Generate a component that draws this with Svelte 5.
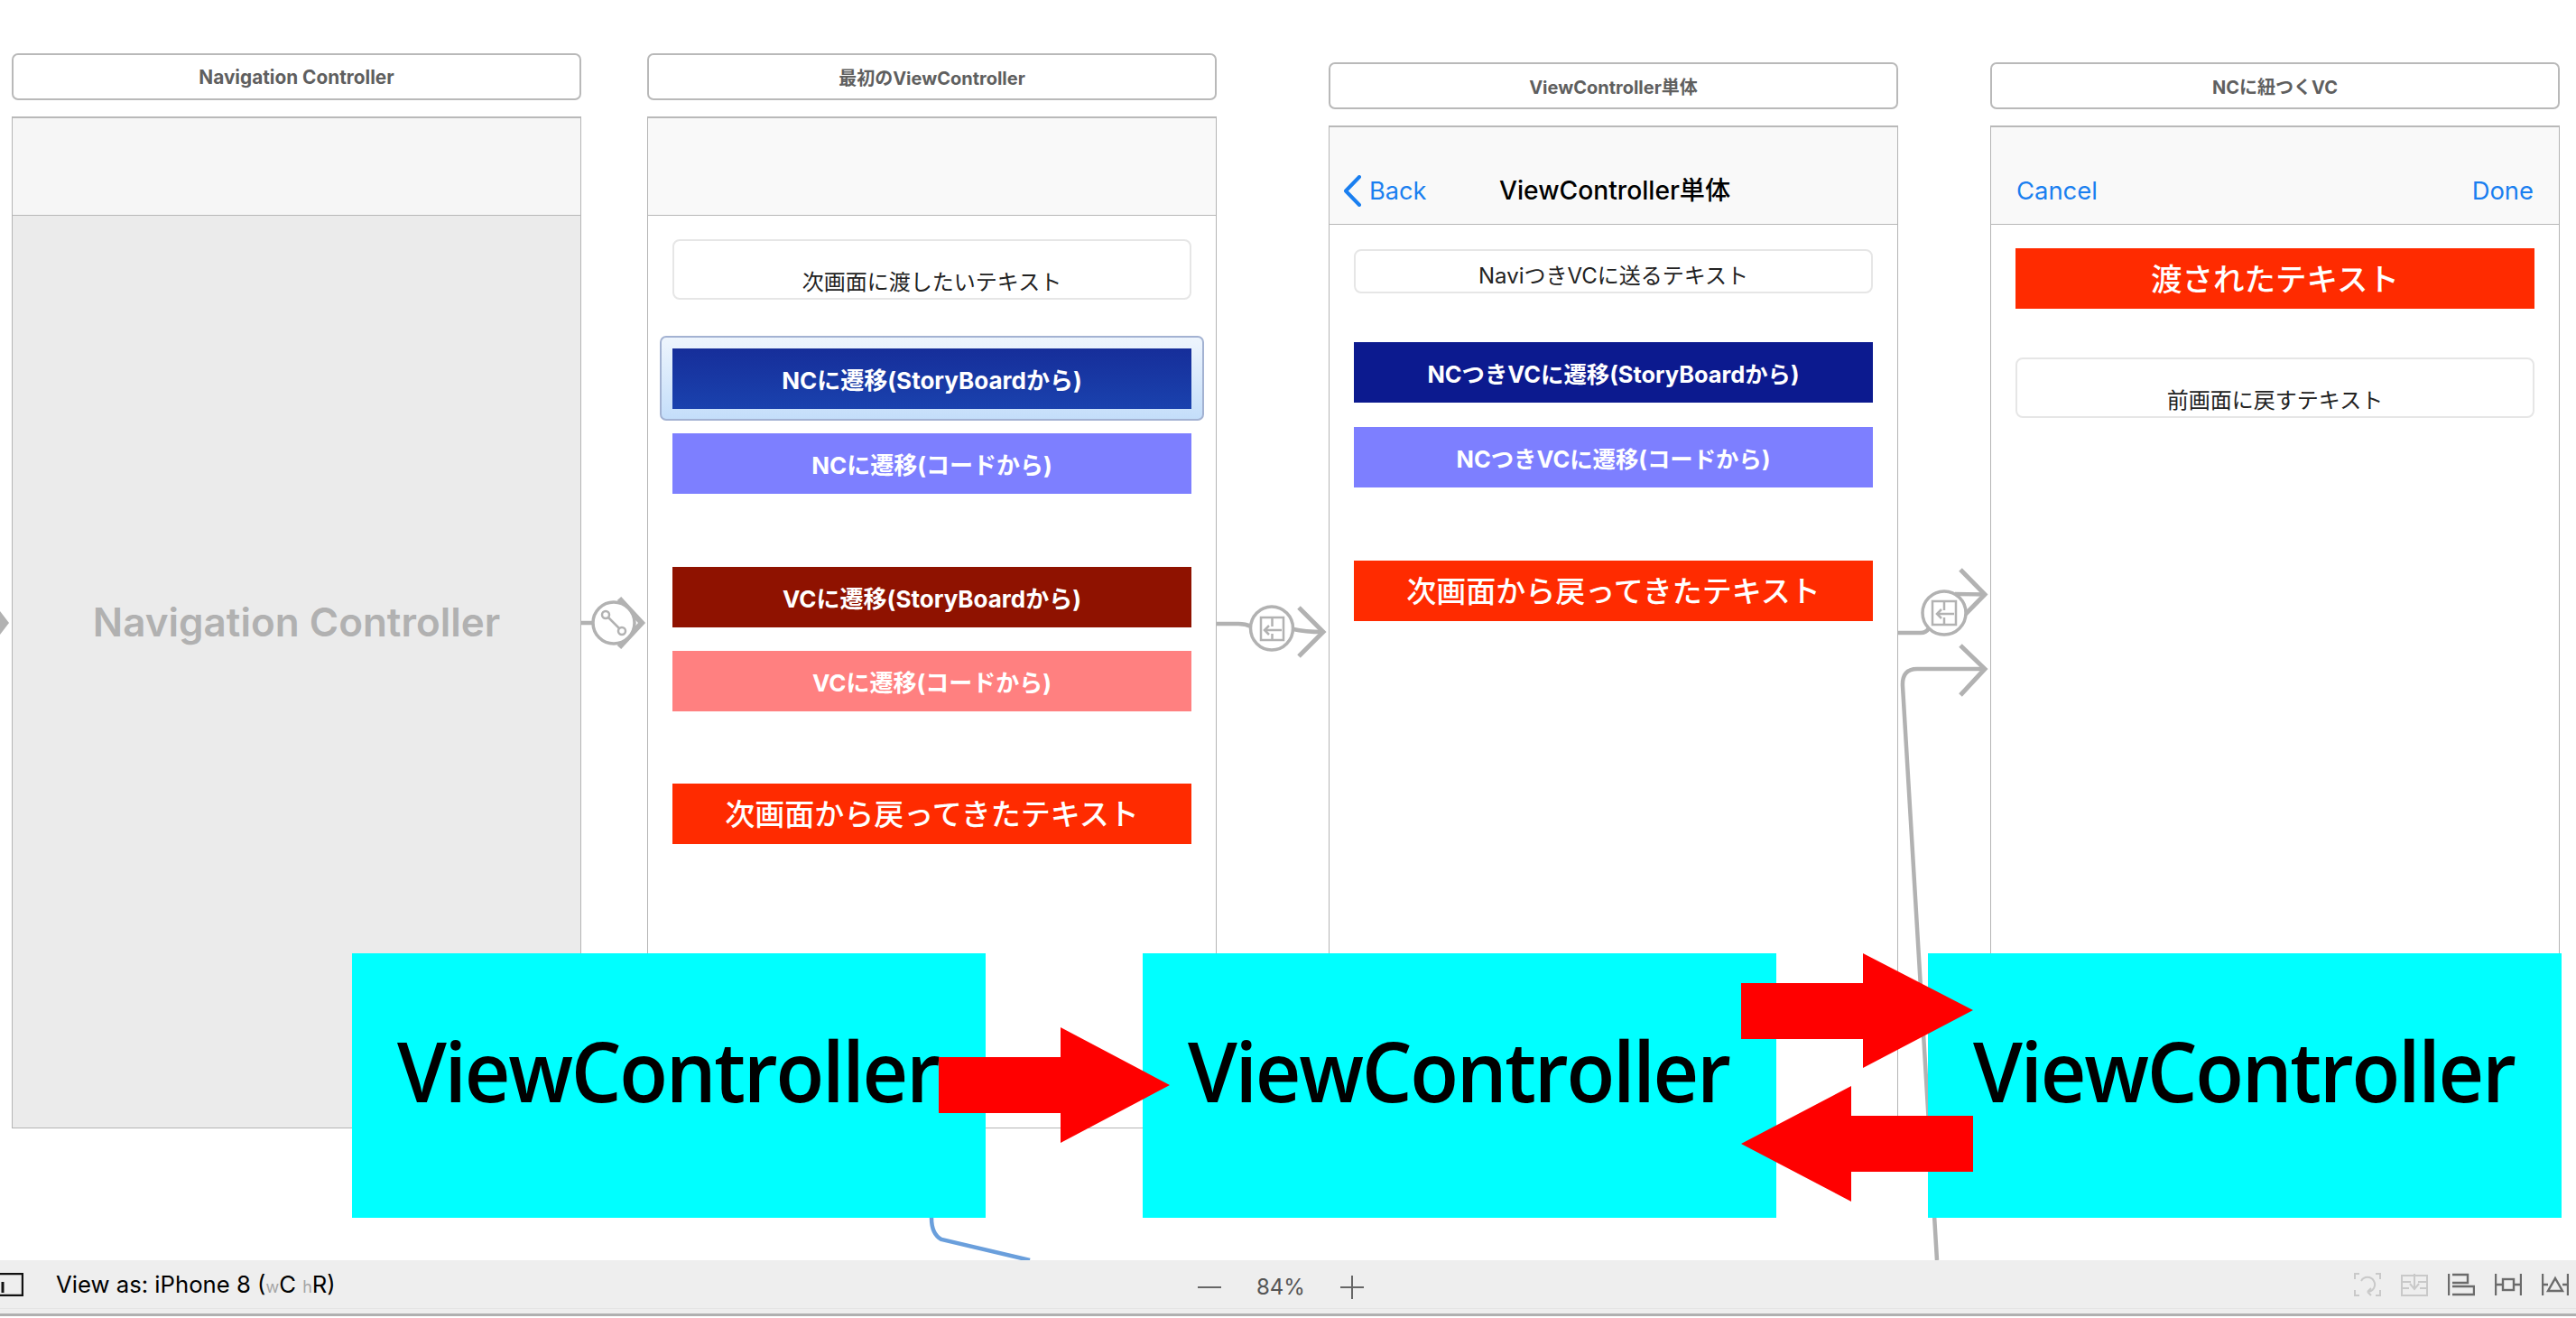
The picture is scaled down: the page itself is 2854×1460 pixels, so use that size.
<script>
	const labels = ['ViewController', 'ViewController', 'ViewController'];
</script>

<div class="page">
	<div class="canvas">
		<!-- Navigation Controller -->
		<section class="scene s1">
			<div class="title">Navigation Controller</div>
			<div class="view">
				<div class="nav"></div>
				<div class="body grey"><span class="placeholder">Navigation Controller</span></div>
			</div>
		</section>

		<!-- 最初のViewController -->
		<section class="scene s2">
			<div class="title">最初のViewController</div>
			<div class="view">
				<div class="nav"></div>
				<div class="body">
					<div class="field tall">次画面に渡したいテキスト</div>
					<div class="btn navy selected gap-l">NCに遷移(StoryBoardから)</div>
					<div class="btn blue gap-s">NCに遷移(コードから)</div>
					<div class="btn maroon gap-xl">VCに遷移(StoryBoardから)</div>
					<div class="btn pink">VCに遷移(コードから)</div>
					<div class="btn red last">次画面から戻ってきたテキスト</div>
				</div>
			</div>
		</section>

		<!-- ViewController単体 -->
		<section class="scene s3">
			<div class="title">ViewController単体</div>
			<div class="view">
				<div class="nav bar">
					<span class="back">
						<svg width="20" height="35" viewBox="0 0 20 35"><path d="M18 2 L3 17.5 L18 33" fill="none" stroke="#1a7ff0" stroke-width="4" stroke-linecap="round" stroke-linejoin="round"/></svg>
						Back
					</span>
					<span class="nav-title">ViewController単体</span>
				</div>
				<div class="body">
					<div class="field short">NaviつきVCに送るテキスト</div>
					<div class="btn deep gap-l">NCつきVCに遷移(StoryBoardから)</div>
					<div class="btn blue gap-s">NCつきVCに遷移(コードから)</div>
					<div class="btn red gap-xl">次画面から戻ってきたテキスト</div>
				</div>
			</div>
		</section>

		<!-- NCに紐つくVC -->
		<section class="scene s4">
			<div class="title">NCに紐つくVC</div>
			<div class="view">
				<div class="nav bar split">
					<span class="link">Cancel</span>
					<span class="link">Done</span>
				</div>
				<div class="body">
					<div class="btn red wide">渡されたテキスト</div>
					<div class="field tall gap-l">前画面に戻すテキスト</div>
				</div>
			</div>
		</section>

		<!-- segues -->
		<svg class="layer" width="2854" height="1396" viewBox="0 0 2854 1396">
			<g fill="none" stroke="#b2b2b2" stroke-width="4.5">
				<path d="M644 690 H657"/>
				<path d="M686 663 L711 690 L686 717" stroke-width="6"/>
				<path d="M1348 691 H1372 Q1380 691 1386 694"/>
				<path d="M1433 697 Q1445 700 1466 700"/>
				<path d="M1439 673 L1466 700 L1439 727" stroke-width="5"/>
				<path d="M2103 701 H2128 Q2134 701 2137 696"/>
				<path d="M2166 658 Q2176 658 2199 658.5"/>
				<path d="M2172 631 L2199 658.5 L2172 686" stroke-width="5"/>
				<path d="M2172 715 L2199 741 L2172 770" stroke-width="5"/>
				<path d="M2199 741 H2124 Q2107 741 2108 760 L2146 1396"/>
			</g>
			<g fill="#fff" stroke="#b2b2b2" stroke-width="3.5">
				<circle cx="680" cy="690" r="23"/>
				<ellipse cx="1409" cy="696" rx="23.5" ry="24"/>
				<circle cx="2154" cy="679" r="24"/>
			</g>
			<path d="M0 677 L10 690 L0 703 Z" fill="#b2b2b2"/>
			<g fill="none" stroke="#b2b2b2" stroke-width="2.5">
				<circle cx="671" cy="681" r="4"/>
				<circle cx="689" cy="699" r="4"/>
				<path d="M674 684 L686 696"/>
				<rect x="1397" y="684" width="25" height="25"/>
				<path d="M1409.5 684 V694 M1409.5 702 V709 M1420 698 H1401 M1406 693 L1401 698 L1406 703"/>
				<rect x="2141" y="666" width="26" height="26"/>
				<path d="M2154 666 V676 M2154 684 V692 M2165 680 H2146 M2151 675 L2146 680 L2151 685"/>
			</g>
			<path d="M1032 1349 Q1032 1367 1043 1373 L1141 1396" fill="none" stroke="#6a9fdc" stroke-width="4.5"/>
		</svg>

		<!-- explanation overlay -->
		{#each labels as label, i}
			<div class="vc vc{i}"><span>{label}</span></div>
		{/each}

		<svg class="layer" width="2854" height="1396" viewBox="0 0 2854 1396">
			<g fill="#ff0000">
				<polygon points="1040,1171 1175,1171 1175,1138 1296,1202 1175,1266 1175,1233 1040,1233"/>
				<polygon points="1929,1089 2064,1089 2064,1056 2186,1119 2064,1183 2064,1151 1929,1151"/>
				<polygon points="2186,1236 2051,1236 2051,1203 1929,1267 2051,1331 2051,1298 2186,1298"/>
			</g>
		</svg>
	</div>

	<footer class="status">
		<svg class="panel" width="26" height="26" viewBox="0 0 26 26"><path d="M0 1 H25 V25 H0" fill="none" stroke="#111" stroke-width="2.4"/><path d="M3 10 V22" stroke="#111" stroke-width="3"/></svg>
		<span class="viewas">View as: iPhone 8 (<span class="dim">w</span>C <span class="dim">h</span>R)</span>
		<div class="zoom">
			<svg width="26" height="26" viewBox="0 0 26 26"><path d="M0 13 H26" stroke="#666" stroke-width="2"/></svg>
			<span class="pct">84%</span>
			<svg width="26" height="26" viewBox="0 0 26 26"><path d="M0 13 H26 M13 0 V26" stroke="#666" stroke-width="2"/></svg>
		</div>
		<div class="tools">
			<svg width="30" height="26" viewBox="0 0 30 26" fill="none" stroke="#c9c9c9" stroke-width="2">
				<path d="M1 7 V1 H6 M24 1 H29 V7 M29 19 V25 H24 M6 25 H1 V19"/>
				<path d="M8 9 A8 8 0 0 1 22 9 A8 8 0 0 1 15 21 M15 21 L19 17 M15 21 L19 25"/>
			</svg>
			<svg width="30" height="26" viewBox="0 0 30 26" fill="none" stroke="#c9c9c9" stroke-width="2">
				<path d="M1 3 H29 V25 H1 Z M1 10 H11 M19 10 H29 M1 17 H9 M21 17 H29 M15 1 V16 M10 12 L15 18 L20 12"/>
			</svg>
			<svg width="30" height="26" viewBox="0 0 30 26" fill="none" stroke="#6b6b6b" stroke-width="2.4">
				<path d="M1 1 V25 M5 2 H22 V11 H5 M5 15 H29 V24 H5"/>
			</svg>
			<svg width="30" height="26" viewBox="0 0 30 26" fill="none" stroke="#6b6b6b" stroke-width="2.4">
				<path d="M1 1 V25 M29 1 V25 M1 13 H9 M21 13 H29"/>
				<rect x="9" y="7" width="12" height="12"/>
			</svg>
			<svg width="30" height="26" viewBox="0 0 30 26" fill="none" stroke="#6b6b6b" stroke-width="2.4">
				<path d="M1 1 V25 M29 1 V25 M1 13 H7 M23 13 H29"/>
				<path d="M15 6 L23 20 H7 Z"/>
			</svg>
		</div>
	</footer>
</div>

<style>
	:global(body) {
		margin: 0;
		background: #fff;
	}

	.page {
		width: 2854px;
		height: 1460px;
		display: flex;
		flex-direction: column;
		overflow: hidden;
		font-family: Inter, "Noto Sans CJK JP", sans-serif;
	}

	.canvas {
		position: relative;
		height: 1396px;
		flex: none;
		overflow: hidden;
		background: #fff;
	}

	/* scenes sit on the storyboard canvas */
	.scene {
		position: absolute;
		width: 631px;
		display: flex;
		flex-direction: column;
		gap: 18px;
	}
	.s1 { left: 13px; top: 59px; height: 1191px; }
	.s2 { left: 717px; top: 59px; height: 1191px; }
	.s3 { left: 1472px; top: 69px; height: 1192px; }
	.s4 { left: 2205px; top: 69px; height: 1192px; }

	.title {
		height: 52px;
		box-sizing: border-box;
		border: 2px solid #b9b9b9;
		border-radius: 7px;
		display: flex;
		align-items: center;
		justify-content: center;
		font-size: 20px;
		font-weight: 700;
		color: #5f5f5f;
		background: #fff;
	}
	.s1 .title { font-size: 20.8px; }

	.view {
		flex: 1;
		display: flex;
		flex-direction: column;
		box-sizing: border-box;
		border: 1px solid #b5b5b5;
		border-top: 2px solid #b9b9b9;
		min-height: 0;
	}

	.nav {
		height: 107px;
		flex: none;
		background: #f9f9f9;
		border-bottom: 1px solid #b8b8b8;
	}
	.s1 .nav { background: #f6f6f6; }

	.bar {
		position: relative;
		display: flex;
		align-items: flex-end;
	}
	.split {
		justify-content: space-between;
		padding: 0 28px;
	}

	.back {
		display: flex;
		align-items: center;
		gap: 9px;
		margin: 0 0 19px 15px;
		font-size: 27.2px;
		color: #1a7ff0;
		line-height: 35px;
	}

	.nav-title {
		position: absolute;
		left: 188px;
		bottom: 19px;
		font-size: 28.2px;
		font-weight: 500;
		color: #000;
		line-height: 35px;
	}

	.link {
		font-size: 27.4px;
		color: #1a7ff0;
		line-height: 35px;
		margin-bottom: 19px;
	}

	.body {
		flex: 1;
		padding: 26px 27px 0;
		display: flex;
		flex-direction: column;
		isolation: isolate;
	}
	.s3 .body { padding-top: 27px; }

	.grey {
		background: #ebebeb;
		padding: 0 0 110px;
		align-items: center;
		justify-content: center;
	}

	.placeholder {
		font-size: 44px;
		font-weight: 600;
		color: #b1b1b1;
	}

	.field {
		box-sizing: border-box;
		border: 2px solid #e6e6e6;
		border-radius: 8px;
		background: #fff;
		display: flex;
		justify-content: center;
		align-items: flex-end;
		font-size: 24px;
		line-height: 34px;
		color: #222;
	}
	.field.tall { height: 67px; }
	.field.short { height: 49px; }

	.btn {
		position: relative;
		height: 67px;
		flex: none;
		display: flex;
		align-items: center;
		justify-content: center;
		color: #fff;
		font-size: 26px;
		font-weight: 700;
	}
	.s3 .btn { font-size: 25.4px; }
	.navy { background: linear-gradient(#162e9a, #1a42ae); }
	.deep { background: #0c1a8f; }
	.blue { background: #7d7fff; }
	.maroon { background: #8f1200; }
	.pink {
		background: #ff8080;
		margin-top: 26px;
	}
	.btn.red {
		box-sizing: border-box;
		padding-bottom: 3px;
		background: #ff2b00;
		font-size: 33px;
		font-weight: 500;
	}
	.btn.wide { font-size: 34.5px; }
	.last { margin-top: 80px; }

	.selected::before {
		content: "";
		position: absolute;
		inset: -14px -14px -13px;
		z-index: -1;
		border: 2px solid #a3b2d2;
		border-radius: 7px;
		background: linear-gradient(#eef5fd, #c4defa);
	}

	.gap-s { margin-top: 27px; }
	.gap-l { margin-top: 54px; }
	.gap-xl { margin-top: 81px; }

	.layer {
		position: absolute;
		left: 0;
		top: 0;
		pointer-events: none;
	}

	.vc {
		position: absolute;
		top: 1056px;
		width: 702px;
		height: 293px;
		box-sizing: border-box;
		padding: 67px 0 0 50px;
		background: #00ffff;
		color: #000;
		font-family: "Open Sans", sans-serif;
		font-size: 92px;
		font-weight: 600;
		letter-spacing: -2.4px;
		line-height: 125px;
		white-space: nowrap;
	}
	.vc span {
		display: inline-block;
		transform: scaleX(0.957);
		transform-origin: left center;
	}
	.vc0 { left: 390px; }
	.vc1 { left: 1266px; }
	.vc2 { left: 2136px; }

	.status {
		flex: 1;
		position: relative;
		box-sizing: border-box;
		display: flex;
		align-items: center;
		background: #eeeeee;
		border-bottom: 3px solid #b0b0b0;
		margin-bottom: 2px;
		padding-bottom: 6px;
	}
	.status::after {
		content: "";
		position: absolute;
		left: 0;
		right: 0;
		bottom: 5px;
		height: 1px;
		background: #e4e4e4;
	}

	.panel { flex: none; }

	.viewas {
		margin-left: 36px;
		font-size: 25.7px;
		color: #000;
		white-space: nowrap;
	}
	.dim {
		color: #a5a5a5;
		font-size: 18px;
	}

	.zoom {
		position: absolute;
		left: 1327px;
		top: 15px;
		display: flex;
		align-items: center;
		gap: 39px;
	}
	.pct {
		font-size: 24px;
		color: #555;
	}

	.tools {
		margin-left: auto;
		margin-right: 8px;
		display: flex;
		gap: 22px;
	}
</style>
